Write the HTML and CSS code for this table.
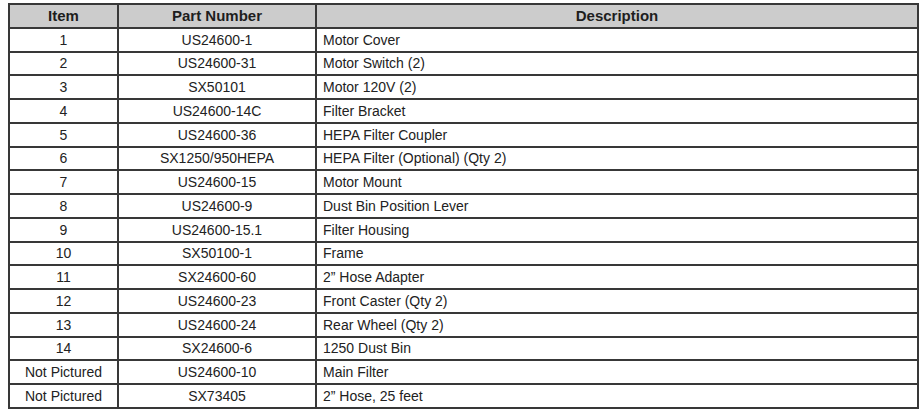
FILE: index.html
```html
<!DOCTYPE html>
<html>
<head>
<meta charset="utf-8">
<link rel="stylesheet" href="styles.css">
</head>
<body>
<table class="parts">
  <colgroup>
    <col class="c-item">
    <col class="c-part">
    <col class="c-desc">
  </colgroup>
  <thead>
    <tr><th>Item</th><th>Part Number</th><th>Description</th></tr>
  </thead>
  <tbody>
    <tr><td class="ctr">1</td><td class="ctr">US24600-1</td><td>Motor Cover</td></tr>
    <tr><td class="ctr">2</td><td class="ctr">US24600-31</td><td>Motor Switch (2)</td></tr>
    <tr><td class="ctr">3</td><td class="ctr">SX50101</td><td>Motor 120V (2)</td></tr>
    <tr><td class="ctr">4</td><td class="ctr">US24600-14C</td><td>Filter Bracket</td></tr>
    <tr><td class="ctr">5</td><td class="ctr">US24600-36</td><td>HEPA Filter Coupler</td></tr>
    <tr><td class="ctr">6</td><td class="ctr">SX1250/950HEPA</td><td>HEPA Filter (Optional) (Qty 2)</td></tr>
    <tr><td class="ctr">7</td><td class="ctr">US24600-15</td><td>Motor Mount</td></tr>
    <tr><td class="ctr">8</td><td class="ctr">US24600-9</td><td>Dust Bin Position Lever</td></tr>
    <tr><td class="ctr">9</td><td class="ctr">US24600-15.1</td><td>Filter Housing</td></tr>
    <tr><td class="ctr">10</td><td class="ctr">SX50100-1</td><td>Frame</td></tr>
    <tr><td class="ctr">11</td><td class="ctr">SX24600-60</td><td>2” Hose Adapter</td></tr>
    <tr><td class="ctr">12</td><td class="ctr">US24600-23</td><td>Front Caster (Qty 2)</td></tr>
    <tr><td class="ctr">13</td><td class="ctr">US24600-24</td><td>Rear Wheel (Qty 2)</td></tr>
    <tr><td class="ctr">14</td><td class="ctr">SX24600-6</td><td>1250 Dust Bin</td></tr>
    <tr><td class="ctr">Not Pictured</td><td class="ctr">US24600-10</td><td>Main Filter</td></tr>
    <tr><td class="ctr">Not Pictured</td><td class="ctr">SX73405</td><td>2” Hose, 25 feet</td></tr>
  </tbody>
</table>
</body>
</html>
```
FILE: styles.css
```css
html, body {
  margin: 0;
  padding: 0;
  background: #ffffff;
}
body {
  padding: 3px 0 0 8px;
  font-family: "Liberation Sans", Arial, sans-serif;
  color: #222222;
}
.parts {
  border-collapse: collapse;
  table-layout: fixed;
  width: 909px;
}
.c-item { width: 109px; }
.c-part { width: 198px; }
.c-desc { width: 602px; }
.parts th,
.parts td {
  border: 2px solid #383838;
  padding: 0 6px;
  height: 23.76px;
  box-sizing: border-box;
  white-space: nowrap;
  line-height: 16px;
}
.parts th {
  background: #cccccc;
  font-size: 15px;
  font-weight: bold;
  text-align: center;
  color: #1e1e1e;
}
.parts td {
  font-size: 14px;
  text-align: left;
}
.parts td.ctr {
  text-align: center;
}
```
